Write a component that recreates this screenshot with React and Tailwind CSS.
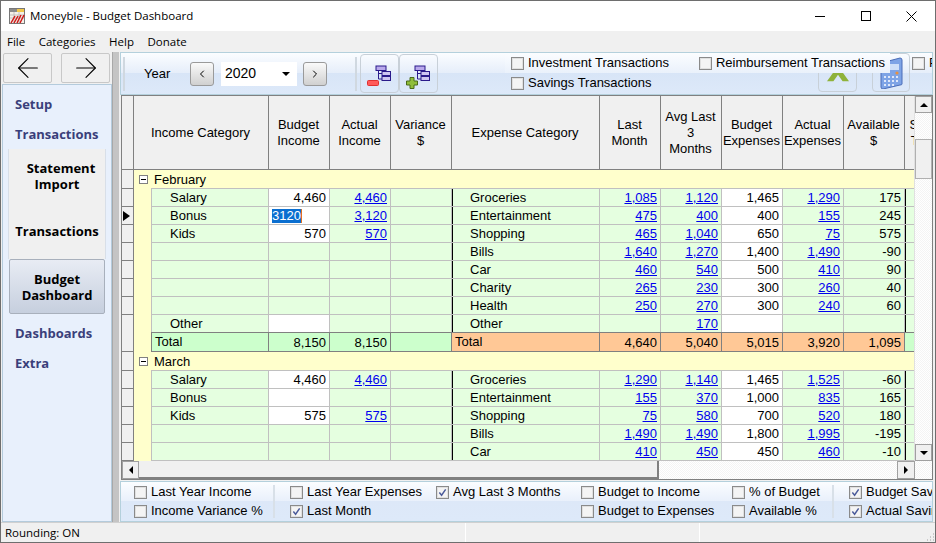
import { ArrowLeft, ArrowRight, ChevronLeft, ChevronRight } from "lucide-react";

const febRows = [
  ["Salary", "4,460", "4,460", "Groceries", "1,085", "1,120", "1,465", "1,290", "175"],
  ["Bonus", "3120", "3,120", "Entertainment", "475", "400", "400", "155", "245"],
  ["Kids", "570", "570", "Shopping", "465", "1,040", "650", "75", "575"],
  ["", "", "", "Bills", "1,640", "1,270", "1,400", "1,490", "-90"],
  ["", "", "", "Car", "460", "540", "500", "410", "90"],
  ["", "", "", "Charity", "265", "230", "300", "260", "40"],
  ["", "", "", "Health", "250", "270", "300", "240", "60"],
  ["Other", "", "", "Other", "", "170", "", "", ""],
];

const marRows = [
  ["Salary", "4,460", "4,460", "Groceries", "1,290", "1,140", "1,465", "1,525", "-60"],
  ["Bonus", "", "", "Entertainment", "155", "370", "1,000", "835", "165"],
  ["Kids", "575", "575", "Shopping", "75", "580", "700", "520", "180"],
  ["", "", "", "Bills", "1,490", "1,490", "1,800", "1,995", "-195"],
  ["", "", "", "Car", "410", "450", "450", "460", "-10"],
];

function RowHead({ current }) {
  return (
    <div className="w-[12px] shrink-0 self-stretch flex items-center border-r border-b border-[#808080] bg-[#f0f0f0]">
      {current && <span className="ml-[1px] w-0 h-0 border-y-[5px] border-y-transparent border-l-[7px] border-l-black" />}
    </div>
  );
}

function Num({ value, link, white, edit }) {
  return (
    <div className={`w-[61px] shrink-0 h-full flex items-center justify-end pt-[1px] pr-[3px] border-r border-[#c0c0c0] ${white ? "bg-white" : ""}`}>
      {edit ? (
        <span className="mr-auto ml-[3px] bg-[#0b6fd0] text-white leading-[14px] border-r border-[#e07020]">{value}</span>
      ) : link && value ? (
        <a className="text-[#0000ee] underline">{value}</a>
      ) : (
        value
      )}
    </div>
  );
}

function DataRow({ row, current, editIncome }) {
  const [cat, budget, actual, exp, last, avg, bud, act, avail] = row;
  return (
    <div className="flex h-[18px] leading-[18px]">
      <RowHead current={current} />
      <div className="w-[18px] shrink-0 bg-[#ffffcc] border-r border-[#c0c0c0]" />
      <div className="flex flex-1 bg-[#e5ffe0] border-b border-[#c0c0c0]">
        <div className="w-[117px] shrink-0 pl-[18px] border-r border-[#c0c0c0] h-full">{cat}</div>
        <Num value={budget} white={cat !== ""} edit={editIncome} />
        <Num value={actual} link />
        <Num value="" />
        <div className="w-[148px] shrink-0 pl-[17px] border-l border-l-black border-r border-[#c0c0c0] h-full">{exp}</div>
        <Num value={last} link />
        <Num value={avg} link />
        <Num value={bud} white />
        <Num value={act} link />
        <Num value={avail} />
        <div className="w-[1px] shrink-0 bg-black" />
      </div>
    </div>
  );
}

function TotalCell({ value }) {
  return (
    <div className="w-[61px] shrink-0 flex items-center justify-end pr-[3px] border-r border-[#808080]">{value}</div>
  );
}

function TotalRow({ values }) {
  return (
    <div className="flex h-[20px] -mt-[1px] leading-[17px]">
      <RowHead />
      <div className="w-[18px] shrink-0 bg-[#ffffcc] border-r border-[#808080]" />
      <div className="flex flex-1 bg-[#ccffcc] border-y border-[#808080]">
        <div className="w-[117px] shrink-0 pl-[3px] border-r border-[#808080]">Total</div>
        <TotalCell value={values[0]} />
        <TotalCell value={values[1]} />
        <TotalCell value="" />
        <div className="flex bg-[#ffc896]">
          <div className="w-[148px] shrink-0 pl-[3px] border-r border-[#808080]">Total</div>
          {values.slice(2).map((v, i) => (
            <TotalCell key={i} value={v} />
          ))}
        </div>
      </div>
    </div>
  );
}

function GroupRow({ label }) {
  return (
    <div className="flex h-[19px] leading-[17px] bg-[#ffffcc]">
      <RowHead />
      <div className="flex-1 flex flex-col">
        <div className="h-[18px] flex items-center">
          <span className="ml-[5px] mr-[6px] w-[9px] h-[9px] border border-[#808080] bg-white flex items-center justify-center">
            <span className="w-[5px] h-[1px] bg-black" />
          </span>
          {label}
        </div>
        <div className="ml-[17px] h-[1px] bg-[#c0c0c0]" />
      </div>
    </div>
  );
}

function HeadCell({ w, children, flex }) {
  return (
    <div className={`${w ?? ""} ${flex ? "flex-1 min-w-0" : "shrink-0"} h-full overflow-hidden flex items-center justify-center pr-[1px] text-center border-r border-[#808080] leading-[16px] whitespace-pre`}>
      {children}
    </div>
  );
}

function Check({ label, checked }) {
  return (
    <label className="flex items-center gap-[4px] whitespace-nowrap leading-[14px]">
      <span className="w-[13px] h-[13px] shrink-0 border border-[#8a8a8a] bg-[#f4f4f4] flex items-center justify-center shadow-[inset_0_0_0_1px_#e0e0e0]">
        {checked && (
          <svg viewBox="0 0 10 10" className="w-[9px] h-[9px]">
            <path d="M1.5 5 L4 8 L8.5 1.5" fill="none" stroke="#4a5a9a" strokeWidth="1.6" />
          </svg>
        )}
      </span>
      {label}
    </label>
  );
}

function TreeIcon({ plus }) {
  return (
    <svg viewBox="0 0 34 30" className="w-[34px] h-[30px]">
      <rect x="13" y="7" width="10" height="4.5" fill="#b9a9ec" stroke="#2a1a8a" />
      <path d="M15.5 11.5 V20 H19 M15.5 14.5 H19" stroke="#2a1a8a" fill="none" />
      <rect x="19" y="12.5" width="8.5" height="4" fill="#cfc6f2" stroke="#2a1a8a" />
      <rect x="19" y="17.5" width="8.5" height="4" fill="#cfc6f2" stroke="#2a1a8a" />
      {plus ? (
        <path d="M8 18.5 h4 v3.5 h3.5 v4 h-3.5 v3.5 h-4 v-3.5 h-3.5 v-4 h3.5 z" fill="#8fbe3a" stroke="#4a6a1a" />
      ) : (
        <rect x="4.5" y="21.5" width="11" height="5" rx="1" fill="#ff5a5a" stroke="#e03030" />
      )}
    </svg>
  );
}

function Logo() {
  return (
    <svg viewBox="0 0 16 16" className="w-[16px] h-[16px]">
      <rect x="0.5" y="0.5" width="15" height="15" fill="#f4f0e8" stroke="#777" />
      <rect x="1" y="1" width="14" height="3" fill="#8a8a8a" />
      <rect x="8" y="1" width="7" height="3" fill="#f2c84a" />
      <path d="M1 7 H15 M1 10 H15 M5 4 V15 M10 4 V15" stroke="#b0b0b0" strokeWidth="0.7" />
      <path d="M2 15 L6 8 M5 15 L9 8 M8 15 L12 7 M11 15 L15 7" stroke="#d01818" strokeWidth="1.5" />
    </svg>
  );
}

export default function App() {
  return (
    <div className="relative w-[936px] h-[543px] overflow-hidden bg-[#f0f0f0] border border-[#6e6e6e] flex flex-col font-['Liberation_Sans',sans-serif] text-black">
      {/* title bar */}
      <div className="h-[30px] shrink-0 bg-white flex items-center font-['Open_Sans',sans-serif] text-[11.5px]">
        <div className="ml-[8px] mr-[5px] flex"><Logo /></div>
        <span>Moneyble - Budget Dashboard</span>
        <div className="ml-auto flex items-center mr-[1px]">
          <span className="w-[10px] h-[1px] bg-black mr-[36px]" />
          <span className="w-[10px] h-[10px] border border-black mr-[35px]" />
          <svg viewBox="0 0 11 11" className="w-[11px] h-[11px] mr-[17px]">
            <path d="M0.5 0.5 L10.5 10.5 M10.5 0.5 L0.5 10.5" stroke="black" />
          </svg>
        </div>
      </div>

      {/* menu */}
      <div className="h-[21px] shrink-0 flex items-center gap-[13.5px] pl-[6px] font-['Open_Sans',sans-serif] text-[11.5px]">
        <span>File</span>
        <span>Categories</span>
        <span>Help</span>
        <span>Donate</span>
      </div>

      <div className="flex flex-1 min-h-0">
        {/* sidebar */}
        <div className="w-[111px] shrink-0 pl-[1px] pt-[1px] flex flex-col">
          <div className="flex gap-[9px] pl-[1px] h-[30px]">
            <button className="w-[49px] border border-[#c8c8c8] rounded-[2px] bg-[#f0f0f0] flex items-center justify-center">
              <ArrowLeft size={32} strokeWidth={0.8} />
            </button>
            <button className="w-[49px] border border-[#c8c8c8] rounded-[2px] bg-[#f0f0f0] flex items-center justify-center">
              <ArrowRight size={32} strokeWidth={0.8} />
            </button>
          </div>
          <div className="flex-1 mt-[1px] bg-[#e8f0fc] border border-[#b4cbdc] font-['Open_Sans',sans-serif] font-bold text-[13px] text-[#3a3f7a]">
            <div className="pl-[12px] h-[15px] mt-[12px] leading-[15px]">Setup</div>
            <div className="pl-[12px] h-[15px] mt-[15px] leading-[15px]">Transactions</div>
            <div className="ml-[5px] mr-[5px] mt-[7px] bg-[#f0f0f0] border-x border-[#d8dfe8] text-black text-center h-[110px] pt-[11px] leading-[16px]">
              <div className="pl-[8px]">Statement</div>
              <div>Import</div>
              <div className="mt-[31px]">Transactions</div>
            </div>
            <div className="ml-[6px] mr-[6px] h-[55px] border border-[#a8b0bc] rounded-[2px] bg-gradient-to-b from-[#e8ecf4] to-[#c6cfde] text-black text-center pt-[11px] leading-[16px]">
              <div>Budget</div>
              <div>Dashboard</div>
            </div>
            <div className="pl-[12px] h-[15px] mt-[12px] leading-[15px]">Dashboards</div>
            <div className="pl-[12px] h-[15px] mt-[15px] leading-[15px]">Extra</div>
          </div>
        </div>

        {/* splitter */}
        <div className="w-[7px] shrink-0 bg-[#c4c4c4] border-l border-[#a8a8a8]" />

        {/* content */}
        <div className="flex-1 min-w-0 flex flex-col bg-[#f0f0f0] ml-[1px] mr-[2px]">
          {/* toolbar */}
          <div className="relative h-[43px] shrink-0 border border-[#b4d0dc] bg-[linear-gradient(#fbfdff,#e6eefa_48%,#d8e5f7_50%,#dde9f9)] flex items-center text-[13px] overflow-hidden">
            <span className="ml-[2px] w-[2px] h-[34px] bg-[#d0d8e0]" />
            <span className="ml-[19px] w-[46px]">Year</span>
            <button className="w-[24px] h-[24px] border border-[#9a9a9a] rounded-[3px] bg-gradient-to-b from-[#fafafa] to-[#d0d0d0] flex items-center justify-center">
              <ChevronLeft size={12} />
            </button>
            <div className="ml-[7px] w-[76px] h-[24px] bg-white flex items-center pl-[4px] text-[14px]">
              2020
              <span className="ml-auto mr-[7px] w-0 h-0 border-x-[4px] border-x-transparent border-t-[4px] border-t-black" />
            </div>
            <button className="ml-[6px] w-[24px] h-[24px] border border-[#9a9a9a] rounded-[3px] bg-gradient-to-b from-[#fafafa] to-[#d0d0d0] flex items-center justify-center">
              <ChevronRight size={12} />
            </button>
            <span className="ml-[28px] w-[2px] h-[34px] bg-[#d0d8e0]" />
            <button className="ml-[3px] w-[39px] h-[39px] border border-[#c8d0d8] rounded-[4px] flex items-center justify-center"><TreeIcon /></button>
            <button className="w-[39px] h-[39px] border border-[#c8d0d8] rounded-[4px] flex items-center justify-center"><TreeIcon plus /></button>

            {/* buttons partly hidden behind the checkbox strip */}
            <div className="absolute left-[697px] top-0 w-[39px] h-[39px] border border-[#c8d0d8] rounded-[4px] flex items-end justify-center overflow-hidden">
              <svg viewBox="0 0 24 20" className="w-[22px] h-[20px] mb-[9px]">
                <path d="M0 20 L8 9 L12 5 L16 9 L24 20 H17 L12 13 L7 20 Z" fill="#8fb23a" />
              </svg>
            </div>
            <div className="absolute left-[751px] top-0 w-[38px] h-[39px] border border-[#c8d0d8] rounded-[4px] flex items-center justify-center">
              <svg viewBox="0 0 24 32" className="w-[24px] h-[32px]">
                <path d="M2 6 L21 1 Q23 1 23 3 V27 Q23 28 21 28 L4 32 Q2 32 2 30 Z" fill="#7ea4e6" stroke="#4a6cb8" />
                <rect x="5" y="7" width="15" height="6" fill="#cfe0f8" />
                <circle cx="18" cy="16" r="1.6" fill="#e89040" />
                <path d="M5 20 h2 M9 20 h2 M13 20 h2 M17 20 h2 M5 24 h2 M9 24 h2 M13 24 h2 M17 24 h2 M5 28 h2 M9 28 h2 M13 28 h2" stroke="#dfe8fa" strokeWidth="2" />
              </svg>
            </div>

            {/* checkbox strip */}
            <div className="absolute left-[384px] top-0 w-[385px] h-[20px] pl-[6px] flex items-center gap-[30px] bg-gradient-to-b from-[#fbfdff] to-[#eaf1fb]">
              <Check label="Investment Transactions" />
              <Check label="Reimbursement Transactions" />
            </div>
            <div className="absolute left-[390px] top-[20px] h-[20px] flex items-center">
              <Check label="Savings Transactions" />
            </div>
            <div className="absolute left-[791px] top-0 h-[20px] flex items-center">
              <Check label="Print" />
            </div>
          </div>

          {/* grid */}
          <div className="relative h-[385px] shrink-0 ml-[1px] border border-[#808080] overflow-hidden text-[13px]">
            <div className="flex h-[74px] border-b border-[#808080] bg-[#f0f0f0]">
              <HeadCell w="w-[12px]" />
              <HeadCell w="w-[135px]">Income Category</HeadCell>
              <HeadCell w="w-[61px]">{"Budget\nIncome"}</HeadCell>
              <HeadCell w="w-[61px]">{"Actual\nIncome"}</HeadCell>
              <HeadCell w="w-[61px]">{"Variance\n$"}</HeadCell>
              <HeadCell w="w-[148px]">Expense Category</HeadCell>
              <HeadCell w="w-[61px]">{"Last\nMonth"}</HeadCell>
              <HeadCell w="w-[61px]">{"Avg Last\n3\nMonths"}</HeadCell>
              <HeadCell w="w-[61px]">{"Budget\nExpenses"}</HeadCell>
              <HeadCell w="w-[61px]">{"Actual\nExpenses"}</HeadCell>
              <HeadCell w="w-[61px]">{"Available\n$"}</HeadCell>
              <HeadCell flex>{"Sa\nTa"}</HeadCell>
            </div>
            <GroupRow label="February" />
            {febRows.map((r, i) => (
              <DataRow key={i} row={r} current={i === 1} editIncome={i === 1} />
            ))}
            <TotalRow values={["8,150", "8,150", "4,640", "5,040", "5,015", "3,920", "1,095"]} />
            <GroupRow label="March" />
            {marRows.map((r, i) => (
              <DataRow key={i} row={r} />
            ))}

            {/* vertical scrollbar */}
            <div className="absolute right-0 top-0 bottom-[18px] w-[18px] bg-[repeating-conic-gradient(#f4f4f4_0_25%,#ffffff_0_50%)] bg-[length:2px_2px] border-l border-[#e0e0e0] flex flex-col items-center">
              <div className="w-[17px] h-[17px] shrink-0 bg-[#f0f0f0] border border-[#a0a0a0] flex items-center justify-center">
                <span className="w-0 h-0 border-x-[4px] border-x-transparent border-b-[4px] border-b-black" />
              </div>
              <div className="w-[17px] h-[40px] mt-[26px] bg-[#f0f0f0] border border-[#b0b0b0]" />
              <div className="mt-auto w-[17px] h-[17px] shrink-0 bg-[#f0f0f0] border border-[#a0a0a0] flex items-center justify-center">
                <span className="w-0 h-0 border-x-[4px] border-x-transparent border-t-[4px] border-t-black" />
              </div>
            </div>

            {/* horizontal scrollbar */}
            <div className="absolute left-0 right-0 bottom-0 h-[18px] bg-[repeating-conic-gradient(#f4f4f4_0_25%,#ffffff_0_50%)] bg-[length:2px_2px] flex">
              <div className="w-[17px] h-full bg-[#f0f0f0] border border-[#a0a0a0] flex items-center justify-center">
                <span className="w-0 h-0 border-y-[4px] border-y-transparent border-r-[4px] border-r-black" />
              </div>
              <div className="w-[520px] h-full bg-[#f0f0f0] border-r-2 border-b-2 border-[#808080]" />
              <div className="ml-auto mr-[17px] w-[18px] h-full bg-[#f0f0f0] border border-[#a0a0a0] flex items-center justify-center">
                <span className="w-0 h-0 border-y-[4px] border-y-transparent border-l-[4px] border-l-black" />
              </div>
            </div>
          </div>

          {/* bottom options */}
          <div className="h-[41px] mt-[1px] shrink-0 border border-[#b4d0dc] bg-[linear-gradient(#fbfdff,#e9f0fb_48%,#dde8f8_50%,#dde9f9)] text-[13px] flex items-center overflow-hidden">
            <div className="ml-[13px] w-[139px] shrink-0 flex flex-col gap-[5px]">
              <Check label="Last Year Income" />
              <Check label="Income Variance %" />
            </div>
            <span className="w-[2px] h-[33px] shrink-0 bg-[#d8e0e8]" />
            <div className="ml-[15px] shrink-0 grid grid-cols-[146px_145px_151px_100px] gap-y-[5px]">
              <Check label="Last Year Expenses" />
              <Check label="Avg Last 3 Months" checked />
              <Check label="Budget to Income" />
              <Check label="% of Budget" />
              <Check label="Last Month" checked />
              <span />
              <Check label="Budget to Expenses" />
              <Check label="Available %" />
            </div>
            <span className="w-[2px] h-[33px] shrink-0 bg-[#d8e0e8]" />
            <div className="ml-[15px] shrink-0 flex flex-col gap-[5px]">
              <Check label="Budget Savings" checked />
              <Check label="Actual Savings" checked />
            </div>
          </div>
        </div>
      </div>

      {/* status bar */}
      <div className="h-[20px] shrink-0 flex items-center border-t border-[#d0d0d0] font-['Open_Sans',sans-serif] text-[11.5px] pl-[4px]">
        <span className="w-[460px]">Rounding: ON</span>
        <span className="w-[1px] h-full bg-white" />
        <span className="ml-[233px] w-[1px] h-full bg-white" />
        <svg viewBox="0 0 10 10" className="ml-auto mt-auto w-[10px] h-[10px]">
          <path d="M8 2 h1 M5 5 h1 M8 5 h1 M2 8 h1 M5 8 h1 M8 8 h1" stroke="#a0a0a0" />
        </svg>
      </div>
    </div>
  );
}
